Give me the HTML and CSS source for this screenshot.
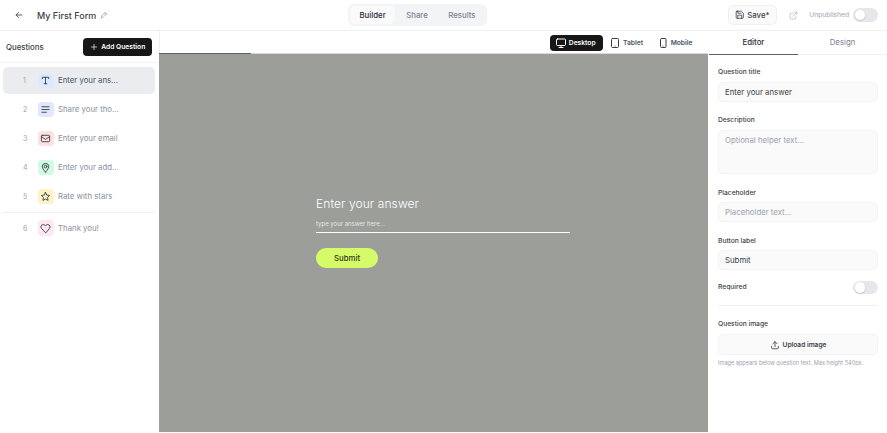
FILE: index.html
```html
<!DOCTYPE html>
<html lang="en">
<head>
  <meta charset="UTF-8">
  <title>My First Form</title>
  <link rel="stylesheet" href="styles.css">
</head>
<body>
  <header class="topbar">
    <div class="top-left">
      <svg class="back" viewBox="0 0 24 24"><path d="M19 12H5M11 6l-6 6 6 6"/></svg>
      <span class="form-name">My First Form</span>
      <svg class="pencil" viewBox="0 0 24 24"><path d="M4 20l1-5L16 4l4 4L9 19zM14 6l4 4"/></svg>
    </div>
    <nav class="mode-tabs">
      <span class="mode-tab active">Builder</span>
      <span class="mode-tab">Share</span>
      <span class="mode-tab">Results</span>
    </nav>
    <div class="top-right">
      <button class="save-btn">
        <svg viewBox="0 0 24 24"><path d="M5 3h11l5 5v11a2 2 0 0 1-2 2H5a2 2 0 0 1-2-2V5a2 2 0 0 1 2-2zM7 21v-8h10v8M7 3v5h8"/></svg>
        Save*
      </button>
      <svg class="open-icon" viewBox="0 0 24 24"><path d="M18 13v6a2 2 0 0 1-2 2H5a2 2 0 0 1-2-2V8a2 2 0 0 1 2-2h6M15 3h6v6M10 14L21 3"/></svg>
      <span class="status">Unpublished</span>
      <span class="toggle"><i></i></span>
    </div>
  </header>

  <div class="main">
    <aside class="sidebar">
      <div class="side-head">
        <span class="side-title">Questions</span>
        <button class="add-btn">
          <svg viewBox="0 0 24 24"><path d="M12 4v16M4 12h16"/></svg>
          Add Question
        </button>
      </div>
      <ul class="q-list">
        <li class="q-item selected">
          <span class="q-num">1</span>
          <span class="q-icon blue"><svg viewBox="0 0 24 24"><path d="M5 8V5h14v3M12 5v14M9 19h6"/></svg></span>
          <span class="q-text">Enter your ans...</span>
        </li>
        <li class="q-item">
          <span class="q-num">2</span>
          <span class="q-icon indigo"><svg viewBox="0 0 24 24"><path d="M4 6h16M4 12h16M4 18h10"/></svg></span>
          <span class="q-text">Share your tho...</span>
        </li>
        <li class="q-item">
          <span class="q-num">3</span>
          <span class="q-icon red"><svg viewBox="0 0 24 24"><rect x="3" y="5" width="18" height="14" rx="2"/><path d="M3 8l9 6 9-6"/></svg></span>
          <span class="q-text">Enter your email</span>
        </li>
        <li class="q-item">
          <span class="q-num">4</span>
          <span class="q-icon green"><svg viewBox="0 0 24 24"><path d="M12 22s-7-7-7-12a7 7 0 0 1 14 0c0 5-7 12-7 12z"/><circle cx="12" cy="10" r="3"/></svg></span>
          <span class="q-text">Enter your add...</span>
        </li>
        <li class="q-item">
          <span class="q-num">5</span>
          <span class="q-icon yellow"><svg viewBox="0 0 24 24"><path d="M12 3l2.8 5.8 6.2.9-4.5 4.4 1.1 6.4L12 17.500l-5.600 3 1.100-6.400L3 9.700l6.200-.9z"/></svg></span>
          <span class="q-text">Rate with stars</span>
        </li>
        <li class="q-item last">
          <span class="q-num">6</span>
          <span class="q-icon pink"><svg viewBox="0 0 24 24"><path d="M12 21l-8.500-8.700a5.300 5.300 0 0 1 0-7.400 5.100 5.100 0 0 1 7.300 0L12 6.100l1.200-1.200a5.100 5.100 0 0 1 7.300 0 5.300 5.300 0 0 1 0 7.400z"/></svg></span>
          <span class="q-text">Thank you!</span>
        </li>
      </ul>
    </aside>

    <section class="canvas">
      <div class="devices">
        <span class="device active">
          <svg viewBox="0 0 24 24"><rect x="3" y="4" width="18" height="13" rx="2"/><path d="M12 17v4M8 21h8"/></svg>
          Desktop
        </span>
        <span class="device">
          <svg viewBox="0 0 24 24"><rect x="5" y="3" width="14" height="18" rx="2"/><path d="M12 18h.01"/></svg>
          Tablet
        </span>
        <span class="device">
          <svg viewBox="0 0 24 24"><rect x="7" y="3" width="11" height="18" rx="2"/><path d="M12 18h.01"/></svg>
          Mobile
        </span>
      </div>
      <div class="progress"><div class="progress-bar"></div></div>
      <div class="stage">
        <div class="preview">
          <div class="preview-title">Enter your answer</div>
          <div class="preview-input">type your answer here...</div>
          <div class="preview-btn">Submit</div>
        </div>
      </div>
    </section>

    <aside class="panel">
      <div class="panel-tabs">
        <span class="panel-tab active">Editor</span>
        <span class="panel-tab">Design</span>
      </div>
      <div class="panel-body">
        <div class="field">
          <label>Question title</label>
          <div class="input">Enter your answer</div>
        </div>
        <div class="field">
          <label>Description</label>
          <div class="input textarea muted">Optional helper text...</div>
        </div>
        <div class="field">
          <label>Placeholder</label>
          <div class="input muted">Placeholder text...</div>
        </div>
        <div class="field flush">
          <label>Button label</label>
          <div class="input">Submit</div>
        </div>
        <div class="required-row">
          <label>Required</label>
          <span class="toggle"><i></i></span>
        </div>
        <div class="field image-field">
          <label>Question image</label>
          <button class="upload-btn">
            <svg viewBox="0 0 24 24"><path d="M4 15v4a2 2 0 0 0 2 2h12a2 2 0 0 0 2-2v-4M12 16V4M7 9l5-5 5 5"/></svg>
            Upload image
          </button>
          <p class="hint">Image appears below question text. Max height 540px.</p>
        </div>
      </div>
    </aside>
  </div>
</body>
</html>
```
FILE: styles.css
```css
* {
  box-sizing: border-box;
}
html, body {
  height: 100%;
}
body {
  margin: 0;
  background: #fff;
  color: #3a3f47;
  font-family: Inter, "Liberation Sans", sans-serif;
  font-size: 7.8px;
  overflow: hidden;
  display: flex;
  flex-direction: column;
}
svg {
  fill: none;
  stroke: currentColor;
  stroke-width: 2;
  stroke-linecap: round;
  stroke-linejoin: round;
  flex: none;
}
button {
  font-family: inherit;
}

/* top bar */
.topbar {
  height: 31px;
  flex: none;
  display: flex;
  align-items: center;
  border-bottom: 1px solid #eef0f2;
  padding: 0 9px 0 14px;
}
.top-left {
  width: 334px;
  display: flex;
  align-items: center;
}
.back {
  width: 10px;
  height: 10px;
  color: #3a3f47;
}
.form-name {
  margin-left: 13px;
  font-size: 9px;
  font-weight: 500;
}
.pencil {
  width: 8px;
  height: 8px;
  margin-left: 3.5px;
  color: #8a909a;
}
.mode-tabs {
  display: flex;
  gap: 1.5px;
  padding: 2px;
  background: #f3f4f6;
  border-radius: 6px;
}
.mode-tab {
  height: 18px;
  line-height: 18px;
  padding: 0 9.5px;
  font-weight: 500;
  color: #7b8291;
  border-radius: 5px;
}
.mode-tab.active {
  background: #fafafa;
  color: #1f2937;
}
.top-right {
  flex: 1;
  display: flex;
  align-items: center;
  justify-content: flex-end;
}
.save-btn {
  height: 20px;
  width: 49px;
  display: flex;
  align-items: center;
  justify-content: center;
  gap: 3px;
  padding: 0;
  background: #fafafa;
  border: 1px solid #eef0f2;
  border-radius: 5px;
  font-size: 7.8px;
  font-weight: 500;
  color: #3a3f47;
}
.save-btn svg {
  width: 9.5px;
  height: 9.5px;
}
.open-icon {
  width: 9px;
  height: 9px;
  margin-left: 12px;
  color: #b4b8bf;
}
.status {
  margin-left: 11.5px;
  font-size: 6.7px;
  color: #9ca3af;
}
.toggle {
  width: 25px;
  height: 13.5px;
  margin-left: 4px;
  padding: 1.5px;
  background: #e5e7eb;
  border-radius: 7px;
  display: block;
}
.toggle i {
  display: block;
  width: 10.5px;
  height: 10.5px;
  background: #fff;
  border-radius: 50%;
  box-shadow: 0 1px 2px rgba(0, 0, 0, 0.15);
}

/* layout */
.main {
  flex: 1;
  display: flex;
  min-height: 0;
}

/* left sidebar */
.sidebar {
  width: 159px;
  flex: none;
}
.side-head {
  height: 32px;
  display: flex;
  align-items: center;
  justify-content: space-between;
  padding: 0 7px 0 6px;
  border-bottom: 1px solid #f1f2f4;
}
.side-title {
  font-weight: 500;
}
.add-btn {
  width: 69px;
  height: 18px;
  display: flex;
  align-items: center;
  justify-content: center;
  gap: 3.5px;
  padding: 0;
  background: #171717;
  border: 0;
  border-radius: 4px;
  color: #fff;
  font-size: 6.7px;
  font-weight: 600;
}
.add-btn svg {
  width: 8px;
  height: 8px;
}
.q-list {
  list-style: none;
  margin: 0;
  padding: 4px 4px 0 3px;
}
.q-item {
  height: 26.5px;
  margin-bottom: 2.5px;
  display: flex;
  align-items: center;
  padding-left: 20px;
  border-radius: 5px;
}
.q-item.selected {
  background: #ebecf0;
}
.q-item.last {
  height: 31px;
  border-top: 1px solid #eef0f2;
  border-radius: 0;
}
.q-num {
  width: 15px;
  font-size: 7px;
  color: #9ca3af;
}
.q-icon {
  width: 15.5px;
  height: 15.5px;
  display: flex;
  align-items: center;
  justify-content: center;
  border-radius: 4px;
  color: #3a3f47;
}
.q-icon svg {
  width: 11px;
  height: 11px;
}
.blue { background: #dbeafe; }
.indigo { background: #e0e7ff; }
.red { background: #fee2e2; }
.green { background: #d1fae5; }
.yellow { background: #fef3c7; }
.pink { background: #fce7f3; }
.q-text {
  margin-left: 4.5px;
  color: #8a909c;
}
.selected .q-text {
  color: #4b5563;
}

/* canvas */
.canvas {
  flex: 1;
  display: flex;
  flex-direction: column;
  min-width: 0;
}
.devices {
  height: 21.5px;
  flex: none;
  display: flex;
  align-items: center;
  justify-content: flex-end;
  gap: 1.5px;
  padding: 2px 8.5px 0 0;
  border-left: 1px solid #eef0f2;
}
.device {
  height: 16px;
  display: flex;
  align-items: center;
  gap: 2px;
  padding: 0 7px 0 5px;
  border-radius: 4px;
  font-size: 6.7px;
  font-weight: 600;
  color: #4b5563;
}
.device svg {
  width: 12px;
  height: 12px;
  color: #3a3f47;
}
.device.active {
  background: #171717;
  color: #fff;
}
.device.active svg {
  color: #fff;
}
.progress {
  height: 1.5px;
  flex: none;
  background: #d8d9d8;
}
.progress-bar {
  width: 92px;
  height: 100%;
  background: #5f615f;
}
.stage {
  flex: 1;
  margin-bottom: 1px;
  background: #9c9e9a;
  padding: 141px 0 0 157px;
}
.preview {
  width: 254px;
  color: #fff;
}
.preview-title {
  font-size: 12px;
  font-weight: 300;
  letter-spacing: 0.1px;
  line-height: 17px;
}
.preview-input {
  margin-top: 6px;
  height: 15px;
  font-size: 6px;
  line-height: 12px;
  color: #e6e7e5;
  border-bottom: 1px solid #fff;
}
.preview-btn {
  margin-top: 15px;
  width: 62px;
  height: 20px;
  line-height: 20px;
  text-align: center;
  background: #d6fb68;
  border-radius: 10px;
  color: #303818;
  font-weight: 500;
}

/* right panel */
.panel {
  width: 179px;
  flex: none;
}
.panel-tabs {
  display: flex;
  height: 24px;
  border-bottom: 1px solid #eef0f2;
  padding-left: 1px;
}
.panel-tab {
  flex: 1;
  text-align: center;
  line-height: 23px;
  color: #7b8291;
}
.panel-tab.active {
  height: 24px;
  color: #1f2937;
  font-weight: 500;
  border-bottom: 1.5px solid #5f6368;
}
.panel-body {
  padding: 13px 9px 0 10px;
}
.field {
  margin-bottom: 14.5px;
}
.field.flush {
  margin-bottom: 0;
}
label {
  display: block;
  font-size: 6.7px;
  font-weight: 500;
  line-height: 9px;
}
.input {
  margin-top: 4.5px;
  height: 20px;
  line-height: 18px;
  padding: 0 6px;
  background: #fafafa;
  border: 1px solid #f1f2f4;
  border-radius: 5px;
  color: #3a3f47;
}
.input.muted {
  color: #9ca3af;
}
.textarea {
  height: 44.5px;
  line-height: 19px;
}
.required-row {
  height: 35.5px;
  display: flex;
  align-items: center;
  justify-content: space-between;
  border-bottom: 1px solid #eef0f2;
}
.image-field {
  margin-top: 14.5px;
}
.upload-btn {
  width: 100%;
  height: 21px;
  margin-top: 5px;
  display: flex;
  align-items: center;
  justify-content: center;
  gap: 3px;
  padding: 0;
  background: #fafafa;
  border: 1px solid #f1f2f4;
  border-radius: 5px;
  color: #3a3f47;
  font-size: 6.6px;
  font-weight: 600;
}
.upload-btn svg {
  width: 10px;
  height: 10px;
}
.hint {
  margin: 4.5px 0 0;
  font-size: 5.6px;
  line-height: 7px;
  color: #9ca3af;
}
```
